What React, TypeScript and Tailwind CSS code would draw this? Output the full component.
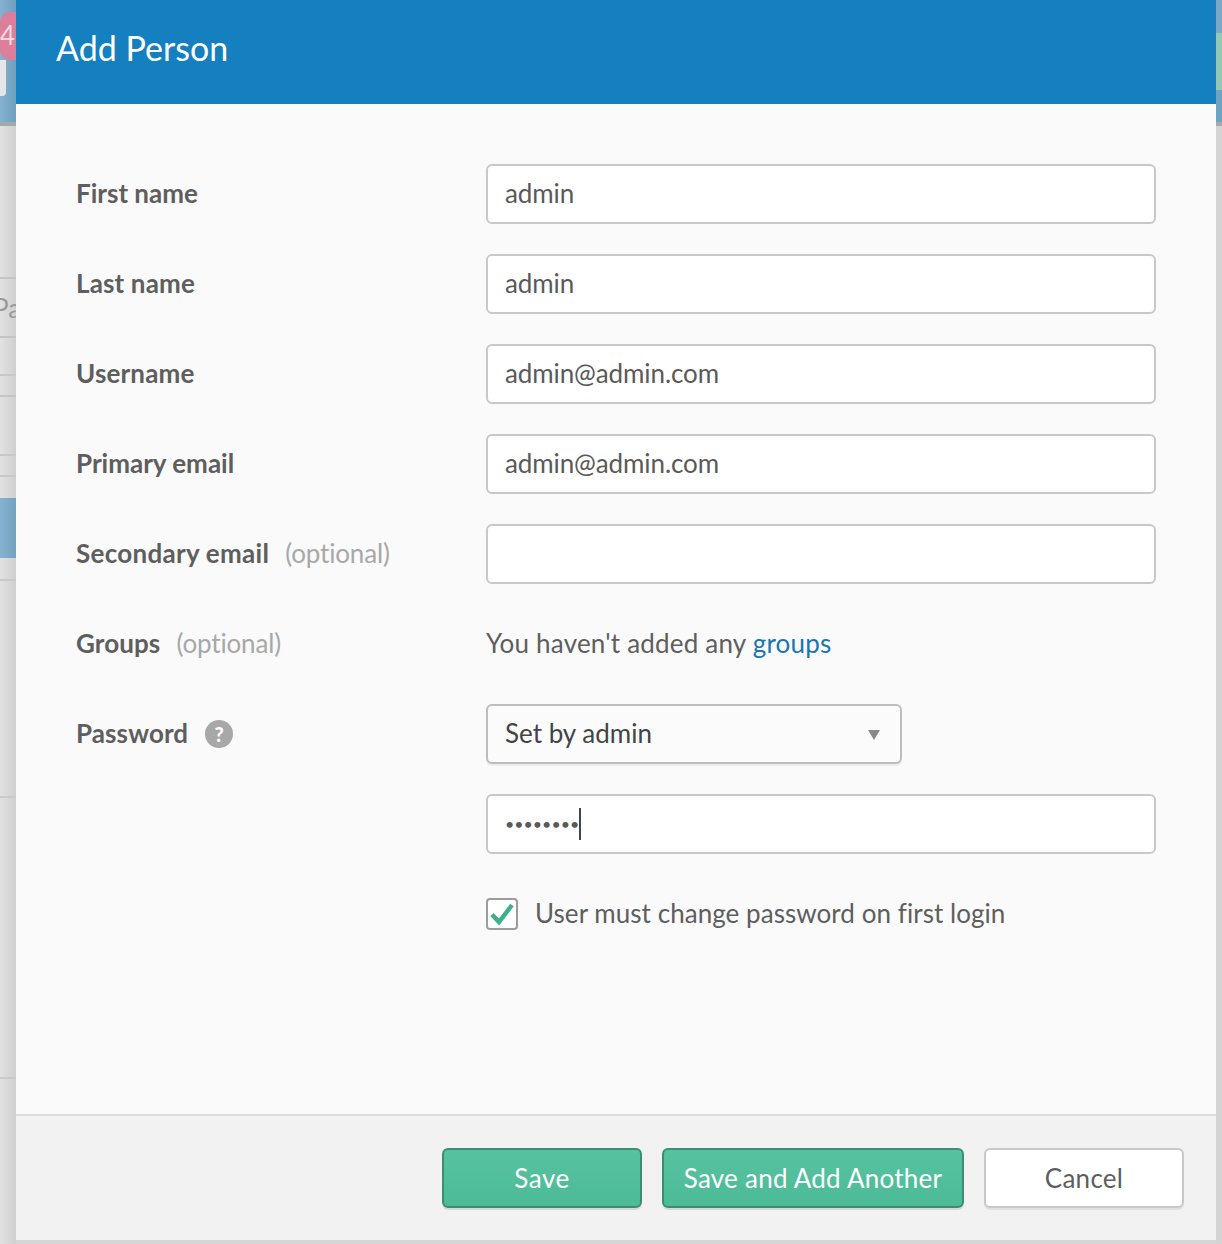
const font = "font-['Lato','Open_Sans',sans-serif]";

function Label({ text, optional, tracking }: { text: string; optional?: boolean; tracking?: string }) {
  return (
    <div className="w-[410px] flex items-center pb-[2px]">
      <span className={`text-[26px] font-bold text-[#5e5e5e] ${tracking ?? "tracking-[0.15px]"}`}>{text}</span>
      {optional && <span className="ml-[16px] text-[26px] tracking-[-0.15px] text-[#a8a8a8]">(optional)</span>}
    </div>
  );
}

function TextField({ value }: { value?: string }) {
  return (
    <input
      readOnly
      defaultValue={value}
      className="w-[670px] h-[60px] rounded-[6px] border-2 border-[#c8c8c8] bg-white px-[17px] pb-[2px] text-[26px] tracking-[-0.1px] text-[#5a5a5a] outline-none"
    />
  );
}

function Row({ label, optional, value, tracking }: { label: string; optional?: boolean; value?: string; tracking?: string }) {
  return (
    <div className="flex h-[60px] mb-[30px]">
      <Label text={label} optional={optional} tracking={tracking} />
      <TextField value={value} />
    </div>
  );
}

export default function App() {
  return (
    <div className={`${font} flex w-[1222px] h-[1244px] overflow-hidden bg-[#d6d6d6]`}>
      {/* dimmed page behind the dialog, left side */}
      <div className="w-[16px] h-full flex flex-col bg-gradient-to-r from-[#e2e2e2] to-[#cfcfcf] overflow-hidden">
        <div className="h-[122px] shrink-0 bg-gradient-to-r from-[#85b2d0] to-[#6fa0bd] pt-[12px]">
          <div className="w-[16px] h-[48px] rounded-l-[10px] bg-[#dd7f9b] pb-[1px] text-[26px] leading-[46px] text-[#f0d8df] overflow-hidden">4</div>
          <div className="w-[6px] h-[36px] rounded-br-[4px] bg-[#e6e6e6]" />
        </div>
        <div className="h-[4px] shrink-0 bg-[#a3a9ad]" />
        <div className="h-[153px] shrink-0 border-b-2 border-[#c4c4c4]" />
        <div className="h-[59px] shrink-0 border-b-2 border-[#c4c4c4] text-[26px] leading-[58px] text-[#9a9a9a] whitespace-nowrap overflow-hidden">
          <span className="block -ml-[7px]">Pa</span>
        </div>
        <div className="h-[38px] shrink-0 border-b-2 border-[#c8c8c8]" />
        <div className="h-[21px] shrink-0 border-b-2 border-[#c4c4c4]" />
        <div className="h-[59px] shrink-0 border-b-2 border-[#c8c8c8]" />
        <div className="h-[21px] shrink-0 border-b-2 border-[#c8c8c8]" />
        <div className="h-[21px] shrink-0" />
        <div className="h-[60px] shrink-0 bg-gradient-to-r from-[#85b2d0] to-[#72a3c0]" />
        <div className="h-[23px] shrink-0 border-b-2 border-[#c8c8c8]" />
        <div className="h-[217px] shrink-0 border-b-2 border-[#cbcbcb]" />
        <div className="h-[281px] shrink-0 border-b-2 border-[#cbcbcb]" />
      </div>

      {/* dialog */}
      <div className="w-[1200px] h-[1240px] shrink-0 flex flex-col bg-[#fafafa]">
        <div className="h-[104px] shrink-0 bg-[#1580c0] pl-[40px] pb-[10px] flex items-center">
          <h1 className="text-[34px] font-normal text-white">Add Person</h1>
        </div>

        <div className="flex-1 pt-[60px] pl-[60px]">
          <Row label="First name" value="admin" tracking="tracking-[0px]" />
          <Row label="Last name" value="admin" />
          <Row label="Username" value="admin@admin.com" />
          <Row label="Primary email" value="admin@admin.com" tracking="tracking-[0px]" />
          <Row label="Secondary email" optional tracking="tracking-[0.28px]" />

          <div className="flex h-[60px] mb-[30px]">
            <Label text="Groups" optional tracking="tracking-[0.1px]" />
            <div className="flex items-center pb-[2px] text-[26px] tracking-[0.2px] text-[#5e5e5e]">
              You haven't added any&nbsp;<span className="text-[#1a76b0]">groups</span>
            </div>
          </div>

          <div className="flex h-[60px] mb-[30px]">
            <div className="w-[410px] flex items-center">
              <span className="text-[26px] font-bold tracking-[0.1px] text-[#5e5e5e] pb-[2px]">Password</span>
              <span className="ml-[17px] w-[28px] h-[28px] rounded-full bg-[#a8a8a8] flex items-center justify-center text-[20px] font-black text-white">?</span>
            </div>
            <div className="w-[416px] h-[60px] rounded-[6px] border-2 border-[#bdbdbd] bg-[#fbfbfb] shadow-[0_2px_0_#ececec] pl-[17px] pr-[20px] flex items-center justify-between text-[26px] text-[#444444]">
              <span className="pb-[2px]">Set by admin</span>
              <svg width="12" height="10" viewBox="0 0 12 10" className="mt-[2px]">
                <path d="M0 0H12L6 10Z" fill="#888888" />
              </svg>
            </div>
          </div>

          <div className="flex h-[60px] mb-[30px]">
            <div className="w-[410px]" />
            <div className="w-[670px] h-[60px] rounded-[6px] border-2 border-[#c8c8c8] bg-white pl-[17px] flex items-center text-[#5a5a5a]">
              <span className="text-[16px] tracking-[0px]">••••••••</span>
              <span className="w-[2px] h-[32px] bg-[#444444]" />
            </div>
          </div>

          <div className="flex h-[60px]">
            <div className="w-[410px]" />
            <div className="flex items-center">
              <span className="w-[32px] h-[32px] rounded-[4px] border-2 border-[#9c9c9c] bg-white flex items-center justify-center">
                <svg width="26" height="24" viewBox="0 0 26 24" fill="none">
                  <path d="M3 12.5L10 20L23 3" stroke="#3fae8c" strokeWidth="4.5" />
                </svg>
              </span>
              <span className="ml-[17px] pb-[2px] text-[26px] tracking-[0.05px] text-[#5e5e5e]">User must change password on first login</span>
            </div>
          </div>
        </div>

        <div className="h-[126px] shrink-0 border-t-2 border-[#dcdcdc] bg-[#f2f2f2] flex items-start justify-end pt-[32px] pr-[32px] gap-[20px]">
          <button className="w-[200px] h-[60px] rounded-[6px] border-2 border-[#3b8e73] bg-gradient-to-b from-[#57c29f] to-[#4dbb98] shadow-[0_2px_0_#d8d8d8] pt-[1px] text-[26px] tracking-[0.5px] text-white">Save</button>
          <button className="w-[302px] h-[60px] rounded-[6px] border-2 border-[#3b8e73] bg-gradient-to-b from-[#57c29f] to-[#4dbb98] shadow-[0_2px_0_#d8d8d8] pt-[1px] text-[26px] tracking-[0.25px] text-white">Save and Add Another</button>
          <button className="w-[200px] h-[60px] rounded-[6px] border-2 border-[#c8c8c8] bg-white shadow-[0_2px_0_#e0e0e0] pt-[1px] text-[26px] tracking-[0.25px] text-[#5e5e5e]">Cancel</button>
        </div>
      </div>

      {/* dimmed page behind the dialog, right side */}
      <div className="w-[6px] h-full flex flex-col bg-[#d4d4d4]">
        <div className="h-[33px] shrink-0 bg-[#7aa8c6]" />
        <div className="h-[57px] shrink-0 bg-[#93c8b4]" />
        <div className="h-[32px] shrink-0 bg-[#6fa3c2]" />
        <div className="h-[4px] shrink-0 bg-[#a3a9ad]" />
      </div>
    </div>
  );
}
